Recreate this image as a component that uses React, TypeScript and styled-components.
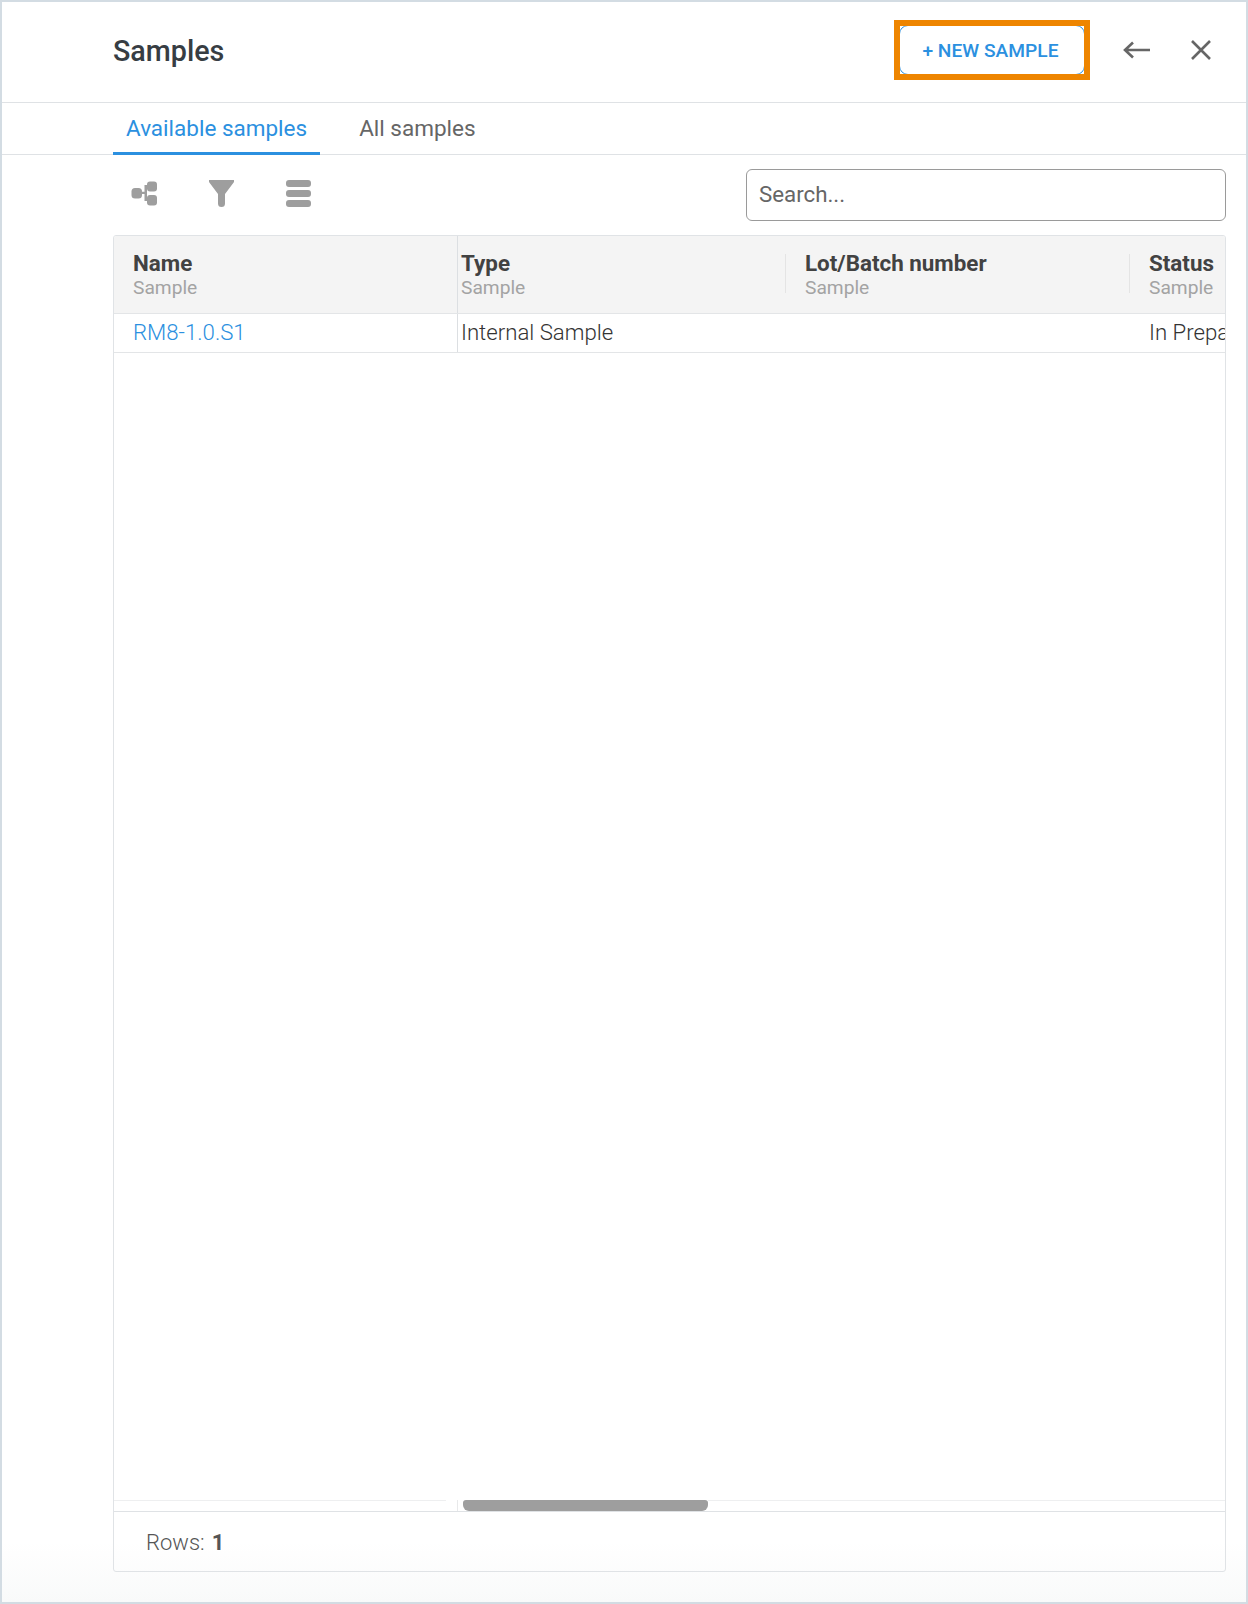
import styled, { createGlobalStyle } from 'styled-components'

const GlobalStyle = createGlobalStyle`
  html, body {
    margin: 0;
    padding: 0;
    background: #fff;
  }
  * {
    box-sizing: border-box;
  }
`

const Frame = styled.div`
  width: 1248px;
  height: 1604px;
  display: flex;
  flex-direction: column;
  border: 2px solid #d3dce3;
  background: linear-gradient(to bottom, #fff 0, #fff 1540px, #f9fafa 1600px);
  font-family: Roboto, 'Liberation Sans', sans-serif;
`

const Header = styled.header`
  height: 101px;
  flex: none;
  display: flex;
  align-items: center;
  padding: 0 32px 4px 111px;
  border-bottom: 1px solid #dfe2e5;
`

const Title = styled.h1`
  margin: 0;
  padding-top: 2px;
  flex: 1;
  font-size: 28.7px;
  font-weight: 500;
  color: #373d43;
`

const NewButton = styled.button`
  position: relative;
  width: 186px;
  height: 50px;
  margin: 0 38px 0 0;
  padding: 0 3px 0 0;
  background: #fff;
  border: 1px solid #2b90e0;
  border-radius: 9px;
  font-family: inherit;
  font-size: 19.2px;
  font-weight: 500;
  color: #2b90e0;

  &::after {
    content: '';
    position: absolute;
    inset: -6px;
    border: 6px solid #ee8500;
  }
`

const HeaderIcon = styled.button<{ $gap: number }>`
  width: 27px;
  height: 20px;
  margin-left: ${(p) => p.$gap}px;
  padding: 0;
  background: none;
  border: 0;
  display: flex;
  align-items: center;
  justify-content: center;
`

const Tabs = styled.nav`
  height: 52px;
  flex: none;
  display: flex;
  padding-left: 111px;
  border-bottom: 1px solid #dfe2e5;
`

const Tab = styled.div<{ $active?: boolean }>`
  height: 52px;
  display: flex;
  align-items: center;
  padding: 0 13px;
  margin-right: 26px;
  font-size: 22.5px;
  color: ${(p) => (p.$active ? '#2b90e0' : '#666')};
  border-bottom: 3px solid ${(p) => (p.$active ? '#2b90e0' : 'transparent')};
`

const Toolbar = styled.div`
  height: 80px;
  flex: none;
  display: flex;
  align-items: flex-start;
  padding: 14px 20px 0 129px;
`

const ToolIcon = styled.svg`
  width: 27px;
  height: 27px;
  margin: 11px 50px 0 0;
  fill: #9e9e9e;
`

const Search = styled.input`
  width: 480px;
  height: 52px;
  margin-left: auto;
  padding: 0 12px 2px;
  border: 1px solid #9a9a9a;
  border-radius: 6px;
  font-family: inherit;
  font-size: 22.3px;
  color: #444;
  outline: none;

  &::placeholder {
    color: #666;
    opacity: 1;
  }
`

const Table = styled.section`
  flex: 1;
  margin: 0 20px 30px 111px;
  display: flex;
  flex-direction: column;
  overflow: hidden;
  border: 1px solid #e0e3e6;
  border-radius: 3px;
`

const Row = styled.div<{ $head?: boolean }>`
  height: ${(p) => (p.$head ? 78 : 39)}px;
  width: 1400px;
  flex: none;
  display: flex;
  background: ${(p) => (p.$head ? '#f4f4f4' : '#fff')};
  border-bottom: 1px solid #e3e5e7;
`

const Cell = styled.div<{ $width: number; $pad: number; $pinned?: boolean; $divider?: boolean }>`
  position: relative;
  width: ${(p) => p.$width}px;
  flex: none;
  display: flex;
  flex-direction: column;
  justify-content: center;
  padding-left: ${(p) => p.$pad}px;
  white-space: nowrap;
  border-right: ${(p) => (p.$pinned ? '1px solid #dcdfe2' : '0')};

  &::before {
    content: ${(p) => (p.$divider ? "''" : 'none')};
    position: absolute;
    left: 0;
    top: 18px;
    height: 39px;
    width: 1px;
    background: #e4e4e4;
  }
`

const ColName = styled.div`
  font-size: 22.4px;
  line-height: 25px;
  font-weight: 700;
  color: #424242;
`

const ColSub = styled.div`
  font-size: 19.2px;
  line-height: 23px;
  color: #a3a3a3;
`

const CellText = styled.span<{ $link?: boolean }>`
  margin-bottom: 2px;
  font-size: 22.2px;
  font-weight: 300;
  color: ${(p) => (p.$link ? '#2b90e0' : '#333')};
`

const Body = styled.div`
  flex: 1;
`

const ScrollArea = styled.div`
  height: 11px;
  flex: none;
  display: flex;
`

const ScrollGutter = styled.div`
  width: 332px;
  border-top: 1px solid #eeeff0;
`

const ScrollTrack = styled.div`
  flex: 1;
  margin-left: 11px;
  padding-left: 5px;
  display: flex;
  border-left: 1px solid #e8e9ea;
`

const ScrollThumb = styled.div`
  width: 245px;
  height: 11px;
  background: #9e9e9e;
  border-radius: 3px 3px 6px 6px;
`

const ScrollRest = styled.div`
  flex: 1;
  border-top: 1px solid #eeeff0;
`

const Footer = styled.footer`
  height: 60px;
  flex: none;
  display: flex;
  align-items: center;
  padding: 1px 0 0 32px;
  border-top: 1px solid #dfe2e5;
  font-size: 22px;
  font-weight: 300;
  color: #555;

  b {
    margin-left: 7px;
    font-weight: 700;
  }
`

export default function App() {
  return (
    <Frame>
      <GlobalStyle />
      <Header>
        <Title>Samples</Title>
        <NewButton>+ NEW SAMPLE</NewButton>
        <HeaderIcon $gap={0}>
          <svg width="27" height="18" viewBox="0 0 27 18" fill="none" stroke="#666" strokeWidth="2.6">
            <path d="M27 9H2M10 1.500 2 9l8 7.500" />
          </svg>
        </HeaderIcon>
        <HeaderIcon $gap={37}>
          <svg width="20" height="20" viewBox="0 0 20 20" fill="none" stroke="#666" strokeWidth="2.6">
            <path d="M1 1l18 18M19 1 1 19" />
          </svg>
        </HeaderIcon>
      </Header>

      <Tabs>
        <Tab $active>Available samples</Tab>
        <Tab>All samples</Tab>
      </Tabs>

      <Toolbar>
        <ToolIcon viewBox="0 0 27 27">
          <rect x="0.500" y="8" width="10.500" height="10.500" rx="3.500" />
          <rect x="16" y="1.500" width="10" height="10" rx="3" />
          <rect x="16" y="15" width="10" height="10.500" rx="3" />
          <path d="M10 11.800h3.500V5H18v2.500h-2v11h2V21h-4.500v-7H10z" />
        </ToolIcon>
        <ToolIcon viewBox="0 0 27 27">
          <path d="M1 0h25v2l-9 12v9.500a3.500 3.500 0 0 1-7 0V14L1 2z" />
        </ToolIcon>
        <ToolIcon viewBox="0 0 27 27">
          <rect x="1" y="0" width="25" height="7" rx="3" />
          <rect x="1" y="10" width="25" height="7" rx="3" />
          <rect x="1" y="20" width="25" height="7" rx="3" />
        </ToolIcon>
        <Search placeholder="Search..." />
      </Toolbar>

      <Table>
        <Row $head>
          <Cell $width={344} $pad={19} $pinned>
            <ColName>Name</ColName>
            <ColSub>Sample</ColSub>
          </Cell>
          <Cell $width={327} $pad={3}>
            <ColName>Type</ColName>
            <ColSub>Sample</ColSub>
          </Cell>
          <Cell $width={344} $pad={20} $divider>
            <ColName>Lot/Batch number</ColName>
            <ColSub>Sample</ColSub>
          </Cell>
          <Cell $width={200} $pad={20} $divider>
            <ColName>Status</ColName>
            <ColSub>Sample</ColSub>
          </Cell>
        </Row>
        <Row>
          <Cell $width={344} $pad={19} $pinned>
            <CellText $link>RM8-1.0.S1</CellText>
          </Cell>
          <Cell $width={327} $pad={3}>
            <CellText>Internal Sample</CellText>
          </Cell>
          <Cell $width={344} $pad={20} />
          <Cell $width={200} $pad={20}>
            <CellText>In Preparation</CellText>
          </Cell>
        </Row>
        <Body />
        <ScrollArea>
          <ScrollGutter />
          <ScrollTrack>
            <ScrollThumb />
            <ScrollRest />
          </ScrollTrack>
        </ScrollArea>
        <Footer>
          Rows:<b>1</b>
        </Footer>
      </Table>
    </Frame>
  )
}
